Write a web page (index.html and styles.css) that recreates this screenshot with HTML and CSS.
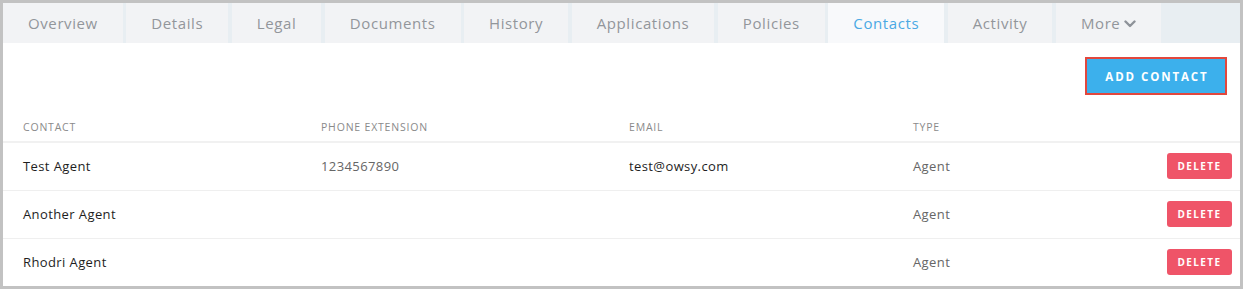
FILE: index.html
```html
<!DOCTYPE html>
<html>
<head>
<meta charset="utf-8">
<link rel="stylesheet" href="styles.css">
</head>
<body>
<div class="frame">
  <nav class="tabs">
    <div class="tab">Overview</div>
    <div class="tab">Details</div>
    <div class="tab">Legal</div>
    <div class="tab">Documents</div>
    <div class="tab">History</div>
    <div class="tab">Applications</div>
    <div class="tab">Policies</div>
    <div class="tab active">Contacts</div>
    <div class="tab">Activity</div>
    <div class="tab more">More
      <svg class="chev" width="12" height="8" viewBox="0 0 12 8"><path d="M1.5 1.5 L6 6 L10.5 1.5" fill="none" stroke="#8e9299" stroke-width="2.4" stroke-linecap="round" stroke-linejoin="round"/></svg>
    </div>
  </nav>
  <section class="panel">
    <div class="toolbar">
      <button class="add-btn">ADD CONTACT</button>
    </div>
    <div class="table">
      <div class="row head">
        <div class="c c1">CONTACT</div>
        <div class="c c2">PHONE EXTENSION</div>
        <div class="c c3">EMAIL</div>
        <div class="c c4">TYPE</div>
        <div class="c c5"></div>
      </div>
      <div class="row">
        <div class="c c1 dark">Test Agent</div>
        <div class="c c2">1234567890</div>
        <div class="c c3 dark">test@owsy.com</div>
        <div class="c c4">Agent</div>
        <div class="c c5"><button class="del-btn">DELETE</button></div>
      </div>
      <div class="row">
        <div class="c c1 dark">Another Agent</div>
        <div class="c c2"></div>
        <div class="c c3 dark"></div>
        <div class="c c4">Agent</div>
        <div class="c c5"><button class="del-btn">DELETE</button></div>
      </div>
      <div class="row">
        <div class="c c1 dark">Rhodri Agent</div>
        <div class="c c2"></div>
        <div class="c c3 dark"></div>
        <div class="c c4">Agent</div>
        <div class="c c5"><button class="del-btn">DELETE</button></div>
      </div>
    </div>
  </section>
</div>
</body>
</html>
```
FILE: styles.css
```css
html, body {
  margin: 0;
  padding: 0;
  background: #c4c4c4;
}
body {
  font-family: "Open Sans", "Liberation Sans", sans-serif;
}
.frame {
  width: 1237px;
  height: 283px;
  border: 3px solid #c2c2c2;
  background: #fff;
  overflow: hidden;
}
.tabs {
  display: flex;
  gap: 3.5px;
  height: 40px;
  background: #e8eef2;
}
.tab {
  display: flex;
  align-items: center;
  justify-content: center;
  padding: 0 25px;
  background: #f2f3f5;
  color: #92969b;
  font-size: 15px;
  letter-spacing: 0.6px;
  white-space: nowrap;
}
.tab.active {
  background: #f8f9fb;
  color: #4aa9e4;
}
.tab.more {
  gap: 4px;
}
.chev {
  display: block;
  margin-top: 1px;
}
.panel {
  display: flex;
  flex-direction: column;
}
.toolbar {
  display: flex;
  justify-content: flex-end;
  padding: 14px 13px 0 0;
  height: 38px;
}
.add-btn {
  box-sizing: border-box;
  width: 142px;
  height: 38px;
  border: 2px solid #e2473d;
  background: #3cb0ec;
  box-shadow: inset 0 0 0 1px #3cb0ec;
  color: #fff;
  font-family: "Open Sans", sans-serif;
  font-weight: 700;
  font-size: 11.5px;
  letter-spacing: 1.9px;
  padding: 0 0 0 2px;
  cursor: pointer;
}
.table {
  margin-top: 16px;
}
.row {
  display: flex;
  align-items: center;
  height: 45px;
  padding-bottom: 2px;
  border-top: 1px solid #efefef;
  font-size: 13px;
  color: #666;
  letter-spacing: 0.4px;
}
.row.head {
  height: 28px;
  padding-top: 2px;
  padding-bottom: 0;
  border-top: none;
  border-bottom: 2px solid #f1f1f1;
  font-size: 10.5px;
  color: #8a8a8a;
  letter-spacing: 0.8px;
}
.row.head + .row {
  border-top: none;
}
.c {
  box-sizing: border-box;
}
.c1 { width: 318px; padding-left: 20px; }
.c2 { width: 308px; }
.c3 { width: 284px; }
.c4 { width: 200px; }
.c5 {
  flex: 1;
  display: flex;
  justify-content: flex-end;
  padding-right: 8px;
}
.dark {
  color: #1e1e1e;
}
.del-btn {
  width: 65px;
  height: 26px;
  border: none;
  border-radius: 3px;
  background: #ef5468;
  color: #fff;
  font-family: "Open Sans", sans-serif;
  font-weight: 700;
  font-size: 10px;
  letter-spacing: 1.4px;
  padding: 0;
}
```
